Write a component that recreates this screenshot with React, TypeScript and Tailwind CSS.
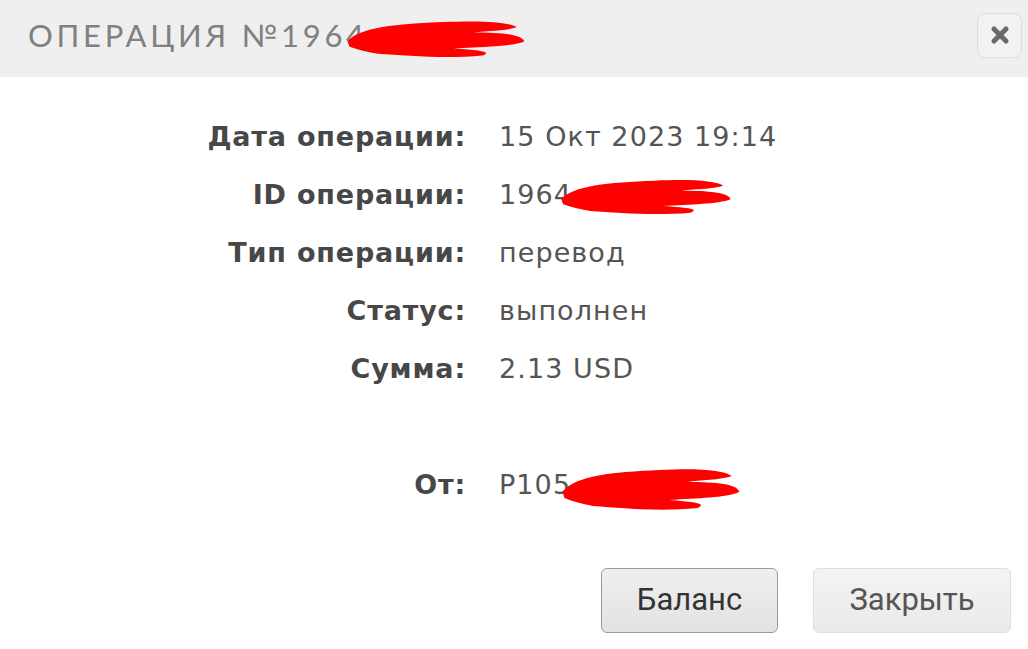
import { X } from "lucide-react";

function Scribble({ className }: { className?: string }) {
  return (
    <svg viewBox="0 0 200 50" preserveAspectRatio="none" className={className}>
      <path
        d="M8 30 C20 14 60 10 110 8 C150 6 178 8 186 14 C176 18 150 18 140 20 C170 20 192 22 194 30 C180 36 150 36 120 38 C150 40 160 42 150 46 C110 50 70 46 40 44 C30 42 20 40 10 36 Z"
        fill="#ff0000"
      />
    </svg>
  );
}

const rows: Array<{ label: string; value: string; redacted?: boolean }> = [
  { label: "Дата операции:", value: "15 Окт 2023 19:14" },
  { label: "ID операции:", value: "1964", redacted: true },
  { label: "Тип операции:", value: "перевод" },
  { label: "Статус:", value: "выполнен" },
  { label: "Сумма:", value: "2.13 USD" },
];

function Row({ label, value, redacted, wide }: { label: string; value: string; redacted?: boolean; wide?: boolean }) {
  return (
    <div className="grid grid-cols-[466px_1fr] items-center h-[58px]">
      <span className="text-right font-semibold text-[#474747] tracking-[0.03em]">{label}</span>
      <span className="pl-[33px] text-[#555] flex items-center tracking-[0.04em]">
        {value}
        {redacted ? (
          <Scribble className={wide ? "w-[190px] h-[50px] -ml-[16px] mt-[4px]" : "w-[182px] h-[42px] -ml-[18px]"} />
        ) : null}
      </span>
    </div>
  );
}

export default function App() {
  return (
    <div className="w-[1028px] h-[649px] bg-white overflow-hidden" style={{ fontFamily: "'DejaVu Sans', sans-serif" }}>
      <header className="h-[77px] bg-[#efefef] flex items-center justify-between pl-[28px] pr-[6px] pb-[7px]">
        <h1
          className="flex items-center text-[31px] tracking-[0.12em] text-[#808080]"
          style={{ fontFamily: "Lato, sans-serif" }}
        >
          ОПЕРАЦИЯ №1964
          <Scribble className="w-[190px] h-[44px] -ml-[28px] mt-[4px]" />
        </h1>
        <button className="w-[45px] h-[45px] rounded-[8px] border border-[#dcdcdc] bg-[#f2f2f2] flex items-center justify-center">
          <X className="w-[24px] h-[24px] text-[#6a6a6a]" strokeWidth={5} />
        </button>
      </header>

      <div className="pt-[31px] text-[27px]">
        {rows.map((r) => (
          <Row key={r.label} {...r} />
        ))}
        <div className="h-[58px]" />
        <Row label="От:" value="P105" redacted wide />
      </div>

      <div className="flex justify-end gap-[35px] pr-[17px] mt-[54px]" style={{ fontFamily: "Roboto, sans-serif" }}>
        <button className="w-[177px] h-[65px] rounded-[6px] border border-[#9a9a9a] bg-gradient-to-b from-[#efefef] to-[#e2e2e2] text-[31px] text-[#333]">
          Баланс
        </button>
        <button className="w-[198px] h-[65px] rounded-[6px] border border-[#dedede] bg-gradient-to-b from-[#f3f3f3] to-[#eaeaea] text-[31px] text-[#555]">
          Закрыть
        </button>
      </div>
    </div>
  );
}
